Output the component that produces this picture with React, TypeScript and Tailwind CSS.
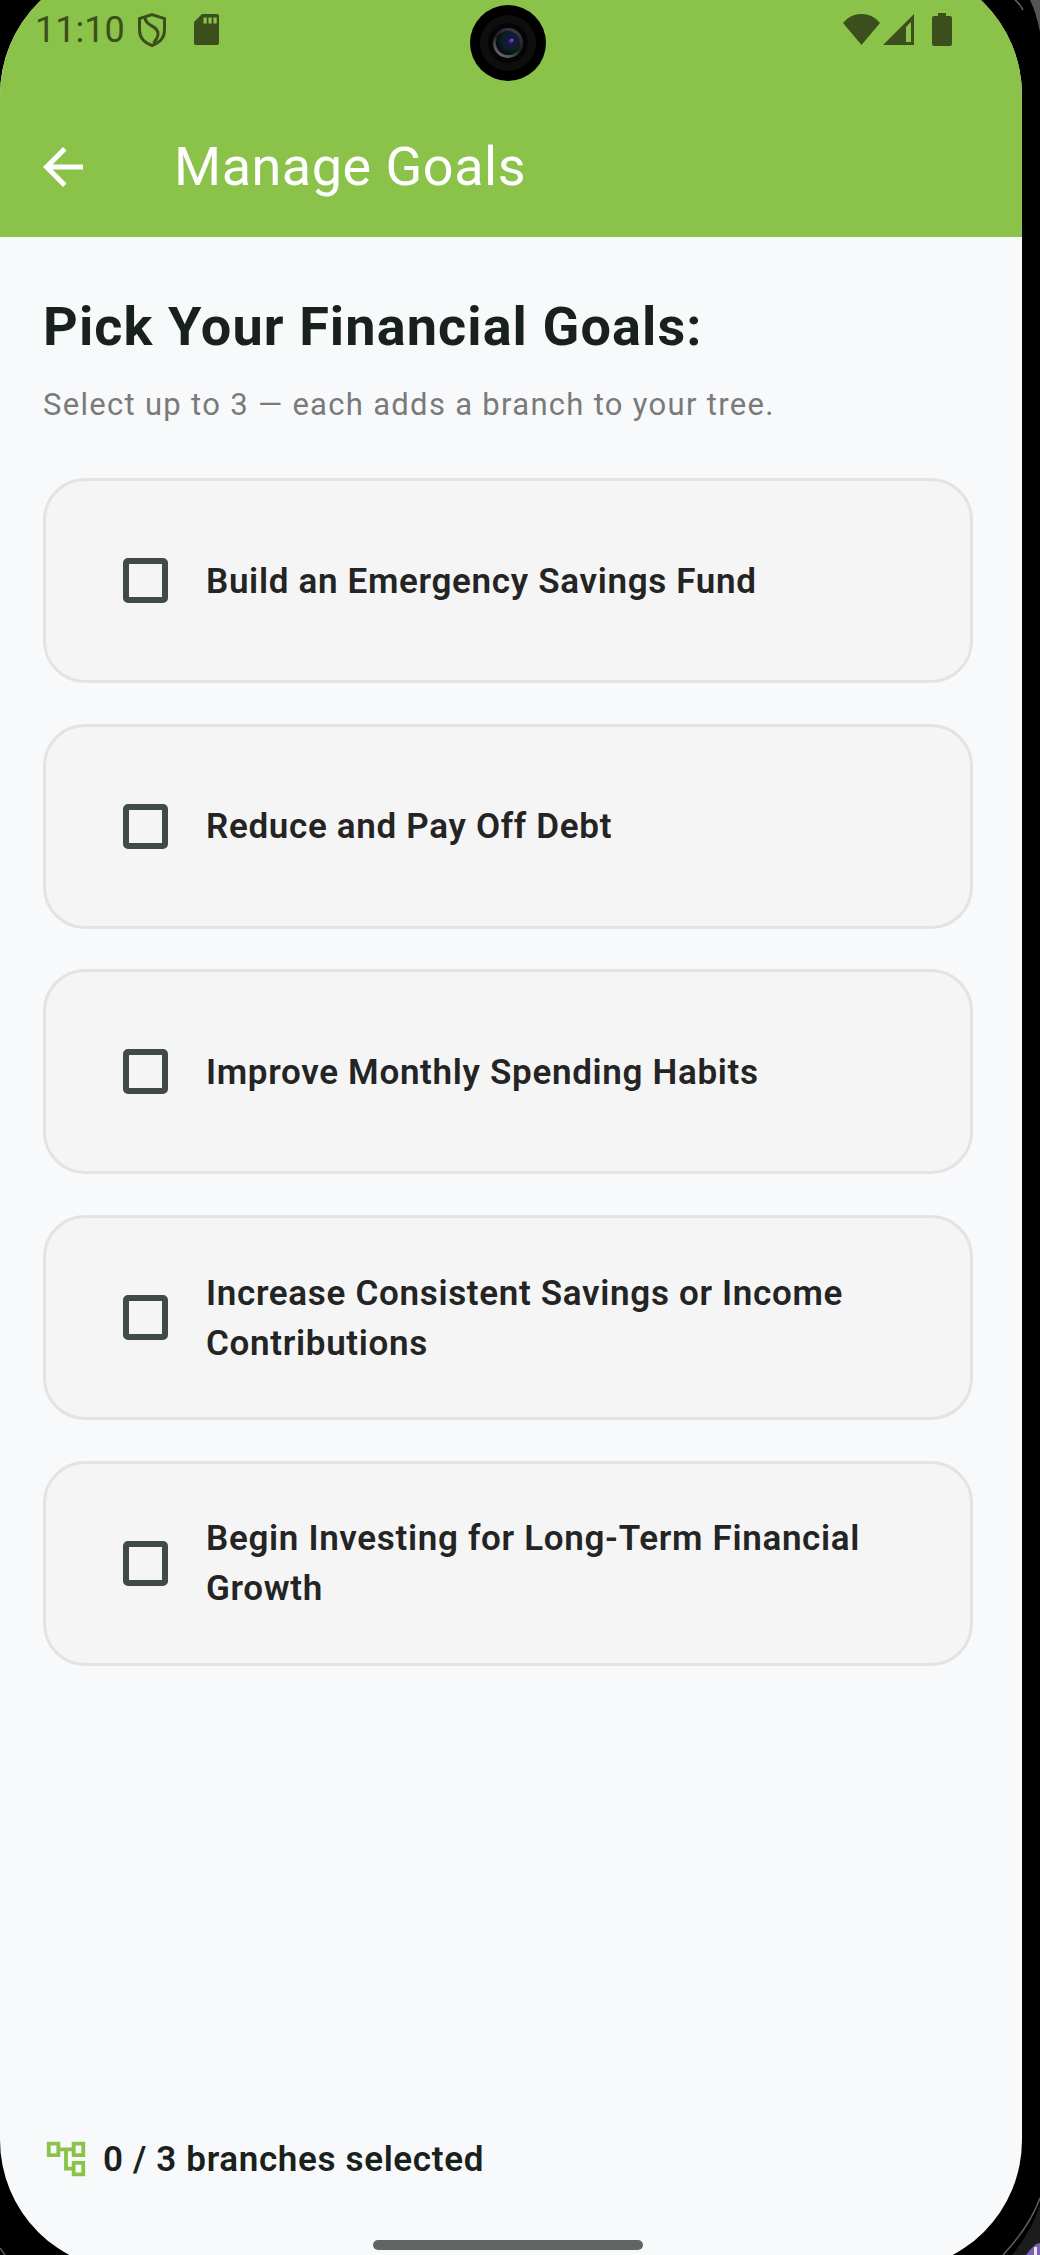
const goals = [
  "Build an Emergency Savings Fund",
  "Reduce and Pay Off Debt",
  "Improve Monthly Spending Habits",
  "Increase Consistent Savings or Income Contributions",
  "Begin Investing for Long-Term Financial Growth",
];

function Camera() {
  return (
    <svg width="76" height="76" viewBox="0 0 76 76" className="absolute left-[470px] top-[40px]">
      <defs>
        <radialGradient id="lens" cx="0.62" cy="0.42" r="0.6">
          <stop offset="0" stopColor="#5a2fb0" />
          <stop offset="0.22" stopColor="#1c1440" />
          <stop offset="0.6" stopColor="#0a2028" />
          <stop offset="1" stopColor="#060a0c" />
        </radialGradient>
        <linearGradient id="ring" x1="0.8" y1="0" x2="0.2" y2="1">
          <stop offset="0" stopColor="#4a3a55" />
          <stop offset="0.5" stopColor="#1c1c1c" />
          <stop offset="1" stopColor="#777" />
        </linearGradient>
      </defs>
      <circle cx="38" cy="38" r="38" fill="#000" />
      <circle cx="38" cy="38" r="28" fill="#0e0e0e" />
      <circle cx="38" cy="38" r="20" fill="#050505" />
      <circle cx="38" cy="38" r="15" fill="url(#ring)" />
      <circle cx="38" cy="38" r="12" fill="url(#lens)" />
      <circle cx="42" cy="35" r="1.3" fill="#7a5af0" />
    </svg>
  );
}

function Bezel() {
  return (
    <svg width="1040" height="2255" viewBox="0 0 1040 2255" className="absolute left-0 top-0 pointer-events-none" fill="none">
      <path d="M1015 0 Q1020 4 1023 10" stroke="#6a6a6a" strokeWidth="1.5" />
      <path d="M1030 0 Q1036 12 1040 32 V0 Z" fill="#555" />
      <path d="M1040 2198 Q1030 2226 1003 2255" stroke="#5e5e5e" strokeWidth="1.5" />
      <path d="M1040 2205 Q1032 2230 1012 2255 H1040 Z" fill="#1c1c1c" />
      <path d="M1026 2255 L1030 2250 L1036 2244 L1040 2243 V2255 Z" fill="#7b5fb0" />
      <path d="M1034 2255 V2247 H1037 V2255 Z" fill="#e8e8f0" />
      <path d="M0 2248 L5 2255" stroke="#5a5a5a" strokeWidth="1.5" />
    </svg>
  );
}

export default function App() {
  return (
    <div className="relative h-[2255px] w-[1040px] overflow-hidden bg-black font-['Roboto',sans-serif]">
      <div className="relative -mt-[35px] flex h-[2305px] w-[1022px] flex-col overflow-hidden rounded-[130px] bg-[#f8f9fb]">
        <header className="flex h-[272px] shrink-0 flex-col bg-[#8bc34a] pt-[35px]">
          <div className="flex h-[60px] items-center justify-between pb-[1px] pl-[35px] pr-[70px] text-[#3a4f1c]">
            <div className="flex items-center">
              <span className="text-[36px] leading-[40px]">11:10</span>
              <svg width="28" height="34" viewBox="0 0 28 34" fill="none" stroke="currentColor" strokeWidth="3" className="ml-[13px]">
                <path d="M14 1.6 L26.5 5.5 V17 C26.5 25 21 30 14 32.5 C7 30 1.5 25 1.5 17 V5.5 Z" />
                <path d="M7 5 C8 14 20 12 20 21 C20 24 18 27 15.5 30" />
              </svg>
              <svg width="25" height="31" viewBox="0 0 25 31" className="ml-[28px]">
                <path d="M8 0H23a2 2 0 0 1 2 2V29a2 2 0 0 1-2 2H2a2 2 0 0 1-2-2V8Z" fill="currentColor" />
                <rect x="9.5" y="3.5" width="3.2" height="6" fill="#8bc34a" />
                <rect x="14.5" y="3.5" width="3.2" height="6" fill="#8bc34a" />
                <rect x="19.5" y="3.5" width="3.2" height="6" fill="#8bc34a" />
              </svg>
            </div>
            <div className="flex items-center">
              <svg width="37" height="31" viewBox="0 0 37 31" fill="currentColor">
                <path d="M18.5 31 L0 9 C5 3 11 0 18.5 0 S32 3 37 9 Z" />
              </svg>
              <svg width="31" height="31" viewBox="0 0 31 31" className="ml-[3px]">
                <path d="M31 0 V31 H0 Z" fill="currentColor" />
                <path d="M23 13 L28 8 V28 H23 Z" fill="#8bc34a" />
              </svg>
              <svg width="20" height="33" viewBox="0 0 20 33" fill="currentColor" className="ml-[18px]">
                <path d="M6 0H14V3H18a2 2 0 0 1 2 2V31a2 2 0 0 1-2 2H2a2 2 0 0 1-2-2V5a2 2 0 0 1 2-2H6Z" />
              </svg>
            </div>
          </div>
          <div className="flex flex-1 items-center pt-[37px] pl-[33px] text-white">
            <svg width="60" height="60" viewBox="0 0 24 24" fill="currentColor">
              <path d="M20 11H7.83l5.59-5.59L12 4l-8 8 8 8 1.41-1.41L7.83 13H20v-2z" />
            </svg>
            <h1 className="ml-[81px] text-[54px] leading-[60px] font-normal tracking-[0.5px]">Manage Goals</h1>
          </div>
        </header>

        <main className="flex flex-1 flex-col px-[43px]">
          <h2 className="mt-[58px] text-[54px] leading-[64px] font-bold tracking-[1.1px] text-[#18211b]">Pick Your Financial Goals:</h2>
          <p className="mt-[22px] text-[31px] leading-[48px] tracking-[1.3px] text-[#7a7a7a]">Select up to 3 — each adds a branch to your tree.</p>

          <ul className="mt-[49px] flex flex-col gap-[40.7px]">
            {goals.map((g) => (
              <li key={g} className="flex h-[205px] w-[930px] items-center rounded-[42px] border-[3px] border-[#e3e3e3] bg-[#f5f5f5] pl-[77px] pr-[60px]">
                <span className="h-[45px] w-[45px] shrink-0 rounded-[5px] border-[6px] border-[#414b45]" />
                <span className="ml-[38px] pt-[2px] text-[35px] leading-[50px] font-semibold tracking-[0.68px] text-[#242424]">{g}</span>
              </li>
            ))}
          </ul>

          <footer className="mt-auto flex items-center pb-[87px]">
            <svg width="46" height="46" viewBox="0 0 24 24" fill="#8bc34a">
              <path d="M22 11V3h-7v3H9V3H2v8h7V8h2v10h4v3h7v-8h-7v3h-2V8h2v3h7zM7 9H4V5h3v4zm10 6h3v4h-3v-4zm0-10h3v4h-3V5z" />
            </svg>
            <span className="ml-[14px] pt-[3px] text-[35px] leading-[46px] font-semibold tracking-[0.65px] text-[#1a211c]">0 / 3 branches selected</span>
          </footer>
        </main>

        <div className="absolute bottom-[20px] left-[373px] h-[10px] w-[270px] rounded-full bg-[#636563]" />
        <Camera />
      </div>
      <Bezel />
    </div>
  );
}
